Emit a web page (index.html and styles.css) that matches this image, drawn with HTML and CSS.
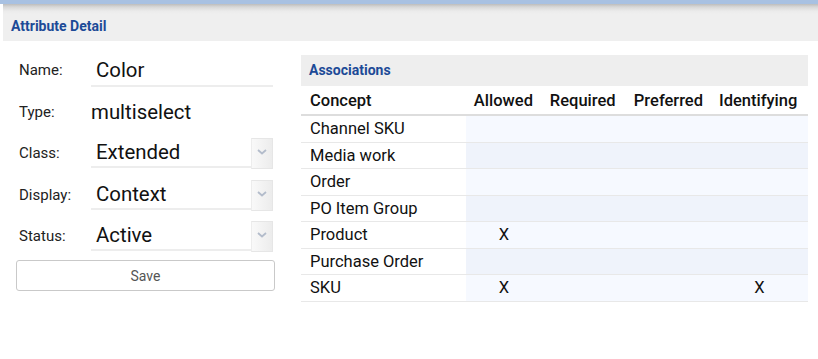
FILE: index.html
```html
<!DOCTYPE html>
<html>
<head>
<meta charset="utf-8">
<link rel="stylesheet" href="styles.css">
</head>
<body>
<div class="topbar"></div>
<div class="panel">
  <div class="panel-head">Attribute Detail</div>
  <div class="content">
    <div class="form">
      <div class="row">
        <div class="label">Name:</div>
        <div class="field input"><span>Color</span></div>
      </div>
      <div class="row">
        <div class="label">Type:</div>
        <div class="field plain">multiselect</div>
      </div>
      <div class="row">
        <div class="label">Class:</div>
        <div class="field select"><span>Extended</span><span class="arrow"><svg width="10" height="6" viewBox="0 0 10 6"><path d="M1 1 L5 4.5 L9 1" fill="none" stroke="#b3bccb" stroke-width="1.8"/></svg></span></div>
      </div>
      <div class="row">
        <div class="label">Display:</div>
        <div class="field select"><span>Context</span><span class="arrow"><svg width="10" height="6" viewBox="0 0 10 6"><path d="M1 1 L5 4.5 L9 1" fill="none" stroke="#b3bccb" stroke-width="1.8"/></svg></span></div>
      </div>
      <div class="row">
        <div class="label">Status:</div>
        <div class="field select"><span>Active</span><span class="arrow"><svg width="10" height="6" viewBox="0 0 10 6"><path d="M1 1 L5 4.5 L9 1" fill="none" stroke="#b3bccb" stroke-width="1.8"/></svg></span></div>
      </div>
      <button class="save">Save</button>
    </div>
    <div class="assoc">
      <div class="assoc-head">Associations</div>
      <table class="grid">
        <thead>
          <tr><th class="c0">Concept</th><th class="c1">Allowed</th><th class="c2">Required</th><th class="c3">Preferred</th><th class="c4">Identifying</th></tr>
        </thead>
        <tbody>
          <tr><td>Channel SKU</td><td></td><td></td><td></td><td></td></tr>
          <tr><td>Media work</td><td></td><td></td><td></td><td></td></tr>
          <tr><td>Order</td><td></td><td></td><td></td><td></td></tr>
          <tr><td>PO Item Group</td><td></td><td></td><td></td><td></td></tr>
          <tr><td>Product</td><td>X</td><td></td><td></td><td></td></tr>
          <tr><td>Purchase Order</td><td></td><td></td><td></td><td></td></tr>
          <tr><td>SKU</td><td>X</td><td></td><td></td><td>X</td></tr>
        </tbody>
      </table>
    </div>
  </div>
</div>
</body>
</html>
```
FILE: styles.css
```css
html, body {
  margin: 0;
  padding: 0;
  background: #fff;
  font-family: Roboto, "Liberation Sans", sans-serif;
  color: #111;
}
.topbar {
  height: 4px;
  background: #a8c1e2;
}
.panel {
  margin-left: 3px;
}
.panel-head {
  height: 37px;
  box-sizing: border-box;
  padding: 14px 0 0 8px;
  background: linear-gradient(#bdbdbd 0, #d8d8d8 3px, #ebebeb 7px, #efefef 10px, #efefef 100%);
  font-size: 14px;
  font-weight: 700;
  color: #1c4a97;
}
.content {
  display: flex;
  padding: 14px 0 0 13px;
  gap: 26px;
}
.form {
  width: 259px;
  display: flex;
  flex-direction: column;
}
.row {
  display: flex;
  align-items: center;
  height: 30px;
  margin-bottom: 11.5px;
}
.label {
  width: 72px;
  padding-left: 3px;
  font-size: 15px;
  color: #222;
}
.field {
  width: 182px;
  height: 30px;
  box-sizing: border-box;
  font-size: 20.4px;
  display: flex;
  align-items: center;
  color: #111;
}
.input {
  border-bottom: 2px solid #ededed;
  padding-left: 5px;
  height: 32px;
  margin-top: 2px;
}
.plain {
  padding-left: 0;
}
.select {
  border-bottom: 2px solid #ededed;
  padding-left: 5px;
  justify-content: space-between;
}
.arrow {
  width: 22px;
  height: 31px;
  margin-bottom: -2px;
  align-self: flex-start;
  box-sizing: border-box;
  border: 1px solid #e6e6e6;
  border-left: 1px solid #ededed;
  background: linear-gradient(90deg, #f9f9f9, #ececec);
  display: flex;
  justify-content: center;
  padding-top: 10px;
}
.save {
  margin-top: -2.5px;
  height: 31px;
  width: 259px;
  background: #fff;
  border: 1px solid #c9c9c9;
  border-radius: 3px;
  font-family: Roboto, "Liberation Sans", sans-serif;
  font-size: 14px;
  color: #555;
}
.assoc {
  width: 507px;
}
.assoc-head {
  height: 31px;
  box-sizing: border-box;
  background: #eeeeee;
  padding: 7px 0 0 8px;
  font-size: 14px;
  font-weight: 700;
  color: #1c4a97;
}
.grid {
  width: 507px;
  border-collapse: collapse;
  font-size: 16.5px;
}
.grid th {
  text-align: left;
  font-weight: 500;
  height: 28px;
  padding: 0 8px;
  border-bottom: 2px solid #dddddd;
  white-space: nowrap;
  color: #111;
}
.grid th.c0 { padding-left: 9px; }
.c1 { width: 60px; }
.c2 { width: 68px; }
.c3 { width: 69px; }
.c4 { width: 81px; }
.grid td {
  height: 25.5px;
  padding: 0 8px;
  border-bottom: 1px solid #e8e8e8;
  text-align: center;
  white-space: nowrap;
  background: #f6f9ff;
}
.grid tbody tr:nth-child(even) td {
  background: #eff3fb;
}
.grid tbody tr td:first-child {
  text-align: left;
  padding-left: 9px;
  background: #fff;
}
```
